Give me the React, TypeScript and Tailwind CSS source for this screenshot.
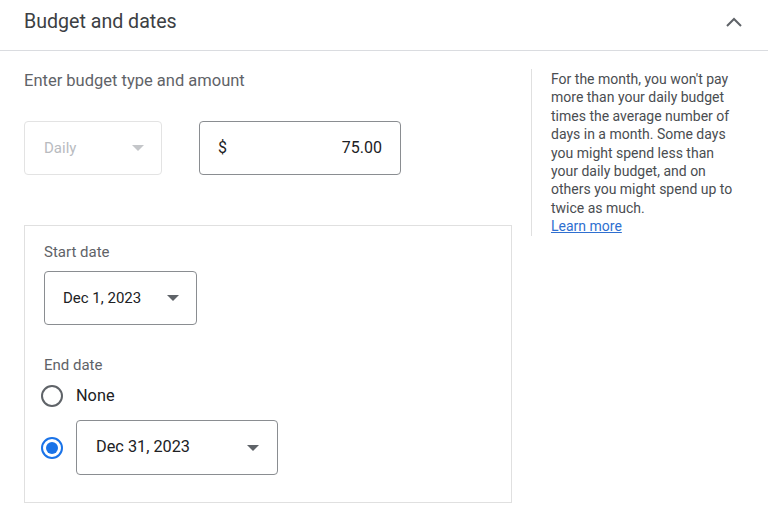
import React from 'react'

const Caret = ({ color = '#5f6368' }: { color?: string }) => (
    <svg width="12" height="6" viewBox="0 0 12 6">
        <path d="M0 0 L12 0 L6 6 Z" fill={color} />
    </svg>
)

const Radio = ({ checked }: { checked?: boolean }) => (
    checked ? (
        <div className="w-[22px] h-[22px] rounded-full border-2 border-[#1a73e8] flex items-center justify-center shrink-0">
            <div className="w-[12px] h-[12px] rounded-full bg-[#1a73e8]" />
        </div>
    ) : (
        <div className="w-[22px] h-[22px] rounded-full border-2 border-[#5f6368] shrink-0" />
    )
)

const App = () => {
    return (
        <div className="w-[768px] h-[528px] bg-white overflow-hidden font-['Roboto',sans-serif] text-[#3c4043]">
            {/* header */}
            <div className="flex items-center justify-between h-[51px] pb-[6px] pl-6 pr-[25px] border-b border-[#dadce0]">
                <h2 className="text-[19.6px] text-[#3c4043]">Budget and dates</h2>
                <svg width="18" height="12" viewBox="0 0 18 12">
                    <polyline points="2,10 9,3 16,10" fill="none" stroke="#5f6368" strokeWidth="2" />
                </svg>
            </div>

            <div className="flex pt-[18px] pl-6">
                {/* left */}
                <div className="w-[488px]">
                    <p className="text-[16.5px] leading-6 text-[#5f6368]">Enter budget type and amount</p>

                    <div className="flex gap-[37px] mt-[28px]">
                        <div className="w-[138px] h-[54px] rounded border border-[#e3e3e3] flex items-center justify-between pl-[19px] pr-[17px]">
                            <span className="text-[15px] text-[#b8bbbf]">Daily</span>
                            <Caret color="#c4c6c9" />
                        </div>
                        <div className="w-[202px] h-[54px] rounded border border-[#8a8d91] flex items-center justify-between pl-[18px] pr-[18px]">
                            <span className="text-[16px] text-[#202124]">$</span>
                            <span className="text-[16px] text-[#202124]">75.00</span>
                        </div>
                    </div>

                    <div className="mt-[50px] h-[278px] border border-[#e0e0e0] pt-[16px] pl-[19px]">
                        <p className="text-[15px] leading-5 text-[#5f6368]">Start date</p>
                        <div className="mt-[9px] w-[153px] h-[54px] rounded border border-[#8a8d91] flex items-center justify-between pl-[18px] pr-[17px]">
                            <span className="text-[15px] text-[#202124]">Dec 1, 2023</span>
                            <Caret />
                        </div>

                        <p className="mt-[30px] text-[15px] leading-5 text-[#5f6368]">End date</p>
                        <div className="mt-[9px] flex items-center h-[24px] -ml-[3px]">
                            <Radio />
                            <span className="ml-[13px] text-[16.3px] text-[#202124]">None</span>
                        </div>
                        <div className="mt-[12px] flex items-center -ml-[3px]">
                            <Radio checked />
                            <div className="ml-[13px] w-[202px] h-[55px] rounded border border-[#8a8d91] flex items-center justify-between pl-[19px] pr-[18px]">
                                <span className="text-[16.3px] text-[#202124]">Dec 31, 2023</span>
                                <Caret />
                            </div>
                        </div>
                    </div>
                </div>

                {/* right help text */}
                <div className="ml-[19px] self-start border-l border-[#e0e0e0] pl-[19px] pt-px w-[218px]">
                    <p className="text-[14px] leading-[18.4px] text-[#4a4d51] w-[190px]">
                        For the month, you won't pay more than your daily budget times the average number of days in a month. Some days you might spend less than your daily budget, and on others you might spend up to twice as much.
                        <br />
                        <a href="#" className="text-[#2f6fd0] underline">Learn more</a>
                    </p>
                </div>
            </div>
        </div>
    )
}

export default App
